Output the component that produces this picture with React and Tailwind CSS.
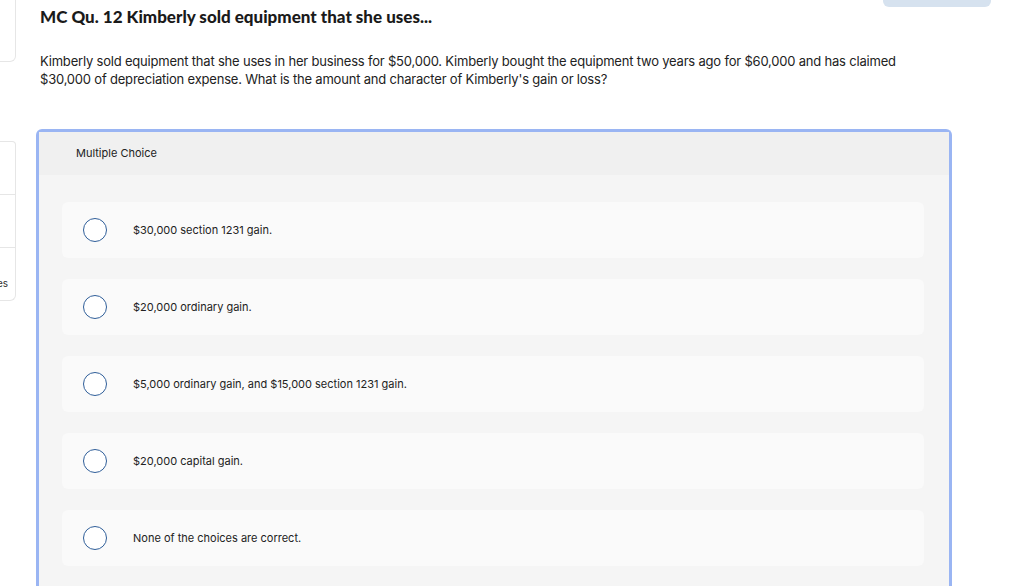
import React from "react";

const CHOICES = [
  "$30,000 section 1231 gain.",
  "$20,000 ordinary gain.",
  "$5,000 ordinary gain, and $15,000 section 1231 gain.",
  "$20,000 capital gain.",
  "None of the choices are correct.",
];

const font = { fontFamily: '"Inter", "Liberation Sans", sans-serif' };

export default function App() {
  return (
    <div className="relative w-[1024px] h-[588px] overflow-hidden bg-white text-[#222]" style={font}>
      {/* top-right button stub */}
      <div className="absolute left-[883px] top-0 w-[108px] h-[7px] rounded-b-md bg-[#d6e2ef]" />

      <div className="flex">
        {/* sidebar sliver */}
        <div className="w-[16px] shrink-0 flex flex-col">
          <div className="h-[72px] -mt-[10px] border border-l-0 border-[#e6e6e6] rounded-br-md" />
          <div className="h-[79px]" />
          <div className="h-[54px] border border-l-0 border-[#e6e6e6] rounded-tr-sm" />
          <div className="h-[53px] border border-l-0 border-t-0 border-[#e6e6e6]" />
          <div className="h-[53px] border border-l-0 border-t-0 border-[#e6e6e6] rounded-br-md flex items-end pb-[9px]">
            <span className="text-[10px] text-[#333] -ml-[3px]">es</span>
          </div>
        </div>

        <div className="pl-[24px] pr-[72px] flex-1">
          <h1 className="text-[17px] font-black leading-[20px] mt-[7px] text-[#1a1a1a]" style={{ fontFamily: '"Lato", "Liberation Sans", sans-serif' }}>
            MC Qu. 12 Kimberly sold equipment that she uses...
          </h1>
          <p className="mt-[25px] text-[13px] tracking-[-0.2px] leading-[18px] text-[#222] w-[870px]">
            Kimberly sold equipment that she uses in her business for $50,000. Kimberly bought the equipment two years ago for $60,000 and has claimed $30,000 of depreciation expense. What is the amount and character of Kimberly's gain or loss?
          </p>

          <div className="mt-[41px] -ml-[4px] w-[916px] border-[3px] border-b-0 border-[#9ab5f3] rounded-t-md bg-[#f5f5f5]">
            <div className="h-[43px] bg-[#f0f0f0] flex items-center pl-[37px] text-[11px] text-[#222]">
              Multiple Choice
            </div>
            <div className="pt-[27px] pl-[23px] pr-[25px] flex flex-col gap-[21px] pb-[20px]">
              {CHOICES.map((c, i) => (
                <div key={i} className="h-[56px] bg-[#fafafa] rounded-md flex items-center pl-[21px]">
                  <span className="w-[24px] h-[24px] rounded-full border-[1.5px] border-[#2f5e99] bg-white shrink-0" />
                  <span className="ml-[26px] text-[11px] text-[#222]">{c}</span>
                </div>
              ))}
            </div>
          </div>
        </div>
      </div>
    </div>
  );
}
